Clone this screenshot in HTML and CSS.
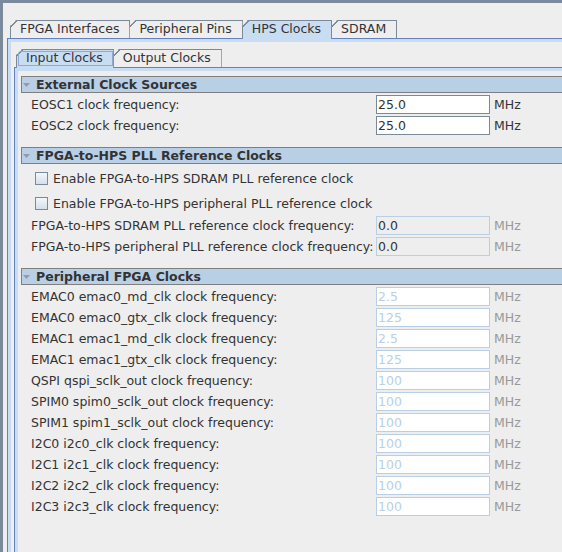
FILE: index.html
```html
<!DOCTYPE html>
<html>
<head>
<meta charset="utf-8">
<link rel="stylesheet" href="styles.css">
</head>
<body>
<div class="frame">
  <div class="tabs outer-tabs">
    <div class="tab">FPGA Interfaces</div>
    <div class="tab">Peripheral Pins</div>
    <div class="tab selected">HPS Clocks</div>
    <div class="tab">SDRAM</div>
  </div>
  <div class="panel outer-panel">
    <div class="tabs inner-tabs">
      <div class="tab selected focus">Input Clocks</div>
      <div class="tab">Output Clocks</div>
    </div>
    <div class="panel inner-panel">
      <section class="section">
        <div class="section-header"><svg class="tri" width="7" height="4" viewBox="0 0 7 4"><polygon points="0,0 7,0 3.5,4" fill="#8e9cab"/></svg>External Clock Sources</div>
        <div class="row"><span class="label">EOSC1 clock frequency:</span><span class="field">25.0</span><span class="unit">MHz</span></div>
        <div class="row"><span class="label">EOSC2 clock frequency:</span><span class="field">25.0</span><span class="unit">MHz</span></div>
      </section>
      <section class="section">
        <div class="section-header"><svg class="tri" width="7" height="4" viewBox="0 0 7 4"><polygon points="0,0 7,0 3.5,4" fill="#8e9cab"/></svg>FPGA-to-HPS PLL Reference Clocks</div>
        <div class="cbrow"><span class="checkbox"></span><span>Enable FPGA-to-HPS SDRAM PLL reference clock</span></div>
        <div class="cbrow"><span class="checkbox"></span><span>Enable FPGA-to-HPS peripheral PLL reference clock</span></div>
        <div class="row"><span class="label">FPGA-to-HPS SDRAM PLL reference clock frequency:</span><span class="field readonly">0.0</span><span class="unit dim">MHz</span></div>
        <div class="row"><span class="label">FPGA-to-HPS peripheral PLL reference clock frequency:</span><span class="field readonly">0.0</span><span class="unit dim">MHz</span></div>
      </section>
      <section class="section">
        <div class="section-header"><svg class="tri" width="7" height="4" viewBox="0 0 7 4"><polygon points="0,0 7,0 3.5,4" fill="#8e9cab"/></svg>Peripheral FPGA Clocks</div>
        <div class="row"><span class="label">EMAC0 emac0_md_clk clock frequency:</span><span class="field disabled">2.5</span><span class="unit dim">MHz</span></div>
        <div class="row"><span class="label">EMAC0 emac0_gtx_clk clock frequency:</span><span class="field disabled">125</span><span class="unit dim">MHz</span></div>
        <div class="row"><span class="label">EMAC1 emac1_md_clk clock frequency:</span><span class="field disabled">2.5</span><span class="unit dim">MHz</span></div>
        <div class="row"><span class="label">EMAC1 emac1_gtx_clk clock frequency:</span><span class="field disabled">125</span><span class="unit dim">MHz</span></div>
        <div class="row"><span class="label">QSPI qspi_sclk_out clock frequency:</span><span class="field disabled">100</span><span class="unit dim">MHz</span></div>
        <div class="row"><span class="label">SPIM0 spim0_sclk_out clock frequency:</span><span class="field disabled">100</span><span class="unit dim">MHz</span></div>
        <div class="row"><span class="label">SPIM1 spim1_sclk_out clock frequency:</span><span class="field disabled">100</span><span class="unit dim">MHz</span></div>
        <div class="row"><span class="label">I2C0 i2c0_clk clock frequency:</span><span class="field disabled">100</span><span class="unit dim">MHz</span></div>
        <div class="row"><span class="label">I2C1 i2c1_clk clock frequency:</span><span class="field disabled">100</span><span class="unit dim">MHz</span></div>
        <div class="row"><span class="label">I2C2 i2c2_clk clock frequency:</span><span class="field disabled">100</span><span class="unit dim">MHz</span></div>
        <div class="row"><span class="label">I2C3 i2c3_clk clock frequency:</span><span class="field disabled">100</span><span class="unit dim">MHz</span></div>
      </section>
    </div>
  </div>
</div>
</body>
</html>
```
FILE: styles.css
```css
html, body {
  margin: 0;
  padding: 0;
  background: #eeeeee;
  overflow: hidden;
}
body {
  font-family: "DejaVu Sans", sans-serif;
  font-size: 12.5px;
  color: #333333;
}
.frame {
  box-sizing: border-box;
  width: 700px;
  height: 552px;
  border-top: 3px solid #7b8a9a;
  border-left: 3px solid #7b8a9a;
  padding: 17px 0 0 4px;
  display: flex;
  flex-direction: column;
}
.tabs {
  display: flex;
  align-items: flex-end;
  height: 18px;
  position: relative;
  z-index: 1;
}
.outer-tabs { padding-left: 3px; }
.inner-tabs { padding-left: 2px; }
.tab {
  position: relative;
  box-sizing: border-box;
  height: 18px;
  line-height: 16px;
  padding: 0 10px 0 9px;
  border: 1px solid #7a8a99;
  border-bottom: none;
  background: #eeeeee;
  margin-left: -1px;
  white-space: nowrap;
  clip-path: polygon(0 6px, 6px 0, 100% 0, 100% 100%, 0 100%);
}
.tab:first-child { margin-left: 0; }
.tab::before {
  content: "";
  position: absolute;
  left: -1px;
  top: -1px;
  width: 7px;
  height: 7px;
  background: linear-gradient(to bottom right, transparent calc(50% - 0.2px), #7a8a99 calc(50% - 0.2px), #7a8a99 calc(50% + 0.9px), transparent calc(50% + 0.9px));
}
.tab.selected {
  background: #c8ddf2;
  height: 19px;
  margin-bottom: -1px;
  z-index: 2;
}
.tab.focus::after {
  content: "";
  position: absolute;
  left: 1px;
  top: 1px;
  right: 0;
  bottom: 2px;
  border: 1px solid #8fa9d1;
}
.panel {
  border-top: 1px solid #6382bf;
  border-left: 1px solid #6382bf;
  box-shadow: inset 3px 3px 0 #c8ddf2;
  flex: 1;
  display: flex;
  flex-direction: column;
}
.outer-panel {
  padding: 10px 0 0 6px;
}
.inner-panel {
  padding: 8px 0 0 6px;
}
.section + .section { margin-top: 12px; }
.section-header {
  box-sizing: border-box;
  height: 17px;
  border: 1px solid #7f7f7f;
  background: #b8cfe5;
  display: flex;
  align-items: center;
  padding-left: 1px;
  font-weight: bold;
  margin-bottom: 2px;
}
.tri { margin-right: 6px; flex: none; }
.row {
  display: flex;
  align-items: center;
  height: 19px;
  margin-top: 2px;
  padding-left: 10px;
}
.section-header + .row { margin-top: 0; }
.label {
  width: 345px;
  flex: none;
  white-space: nowrap;
}
.field {
  box-sizing: border-box;
  width: 114px;
  height: 19px;
  border: 1px solid #7a8a99;
  background: #ffffff;
  padding-left: 1px;
  display: flex;
  align-items: center;
  flex: none;
}
.field.readonly {
  background: #eeeeee;
  border-color: #b8cfe5;
}
.field.disabled {
  border-color: #b8cfe5;
  color: #b8cfe5;
}
.unit { margin-left: 4px; }
.unit.dim { color: #999999; }
.cbrow {
  display: flex;
  align-items: center;
  height: 25px;
  padding-left: 14px;
}
.cbrow + .row { margin-top: 0; }
.checkbox {
  box-sizing: border-box;
  width: 13px;
  height: 13px;
  border: 1px solid #7a8a99;
  background: linear-gradient(#f4f7fa, #d5dfea);
  margin-right: 5px;
  flex: none;
}
```
